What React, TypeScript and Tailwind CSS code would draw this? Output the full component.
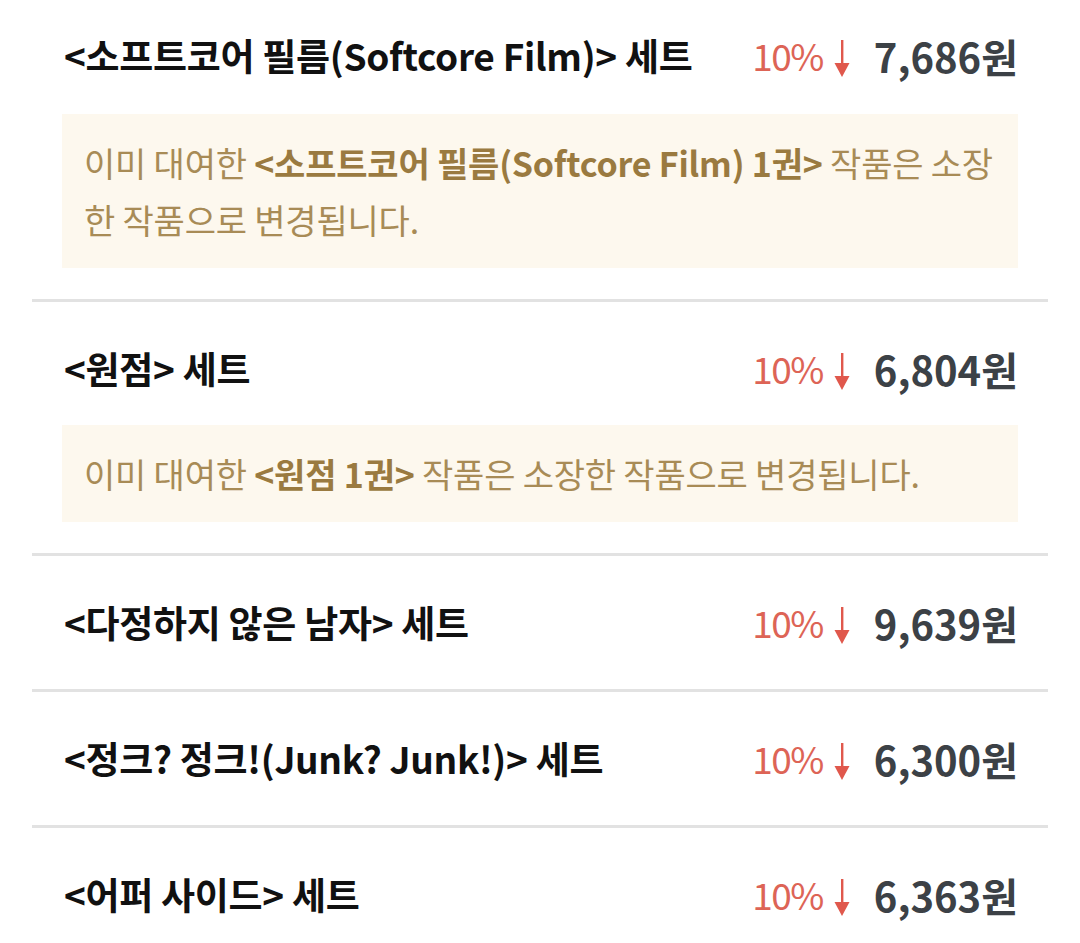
import React from "react";

const FONT = '"Noto Sans CJK KR", "Noto Sans", sans-serif';

function DownArrow() {
  return (
    <svg width="18" height="40" viewBox="0 0 18 40" className="block">
      <rect x="8" y="2" width="2.4" height="26" fill="#e0584c" />
      <polygon points="1.5,25 16.5,25 9,39" fill="#e0584c" />
    </svg>
  );
}

type Item = {
  title: string;
  price: string;
  notice?: { bold: string };
};

const items: Item[] = [
  {
    title: "<소프트코어 필름(Softcore Film)> 세트",
    price: "7,686원",
    notice: { bold: "<소프트코어 필름(Softcore Film) 1권>" },
  },
  { title: "<원점> 세트", price: "6,804원", notice: { bold: "<원점 1권>" } },
  { title: "<다정하지 않은 남자> 세트", price: "9,639원" },
  { title: "<정크? 정크!(Junk? Junk!)> 세트", price: "6,300원" },
  { title: "<어퍼 사이드> 세트", price: "6,363원" },
];

export default function App() {
  return (
    <div
      className="w-[1080px] h-[943px] overflow-hidden bg-white"
      style={{ fontFamily: FONT }}
    >
      <div className="mx-[32px] w-[1016px]">
        {items.map((it, i) => (
          <div
            key={i}
            className={`${i === 0 ? "pt-[20px]" : "pt-[31px]"} ${
              it.notice ? "pb-[31px]" : "pb-[30px]"
            } ${i < items.length - 1 ? "border-b-[3px] border-[#e2e2e2]" : ""}`}
          >
            <div className="flex h-[72px] items-center justify-between pl-[32px] pr-[30px]">
              <div className="text-[37px] font-bold tracking-[-0.3px] text-[#111111]">
                {it.title}
              </div>
              <div className="flex items-center">
                <span className="text-[37px] font-normal tracking-[-1.5px] text-[#dd6456]">
                  10%
                </span>
                <span className="ml-[10px] mr-[23px] mt-[4px]">
                  <DownArrow />
                </span>
                <span className="text-[40px] font-bold tracking-[0px] text-[#3c4146]">
                  {it.price}
                </span>
              </div>
            </div>
            {it.notice && (
              <div
                className={`${
                  i === 0 ? "mt-[22px]" : "mt-[20px]"
                } ml-[30px] mr-[30px] bg-[#fdf8ee] px-[22px] py-[20px] text-[34px] leading-[57px] tracking-[-0.2px] text-[#a88b56]`}
              >
                이미 대여한{" "}
                <span className="font-bold text-[#9a7a40]">{it.notice.bold}</span>{" "}
                작품은 소장한 작품으로 변경됩니다.
              </div>
            )}
          </div>
        ))}
      </div>
    </div>
  );
}
